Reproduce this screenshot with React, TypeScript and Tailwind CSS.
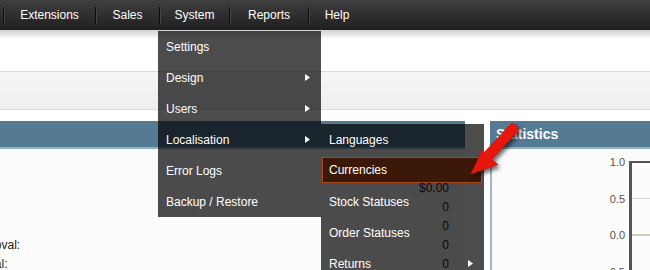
import React from 'react';

const navItems = [
  { label: 'Extensions', w: 'w-[91px]' },
  { label: 'Sales', w: 'w-[63px]' },
  { label: 'System', w: 'w-[69px]' },
  { label: 'Reports', w: 'w-[78px]' },
  { label: 'Help', w: 'w-[56px]' },
];

const systemMenu = [
  { label: 'Settings' },
  { label: 'Design', sub: true },
  { label: 'Users', sub: true },
  { label: 'Localisation', sub: true },
  { label: 'Error Logs' },
  { label: 'Backup / Restore' },
];

const localisationMenu = [
  { label: 'Languages' },
  { label: 'Currencies', active: true },
  { label: 'Stock Statuses' },
  { label: 'Order Statuses' },
  { label: 'Returns', sub: true },
  { label: 'Countries' },
];

const overview = [
  { label: 'Total Sales:', value: '$0.00' },
  { label: 'Total Sales This Year:', value: '$0.00' },
  { label: 'Total Orders:', value: '0' },
  { label: 'No. of Customers:', value: '0' },
  { label: 'Customers Awaiting Approval:', value: '0' },
  { label: 'Reviews Awaiting Approval:', value: '0' },
  { label: 'No. of Affiliates:', value: '0' },
];

function Caret() {
  return (
    <svg width="5" height="7" viewBox="0 0 5 7" className="mr-[11px] shrink-0">
      <polygon points="0,0 5,3.5 0,7" fill="#fff" />
    </svg>
  );
}

function MenuRow({ label, sub, active }: { label: string; sub?: boolean; active?: boolean }) {
  if (active) {
    return (
      <div className="h-[31px] pt-[2px] pb-[3px] pl-px pr-[2px]">
        <div className="flex h-full items-center border border-[#a9481c] bg-[#3b1808] pl-[6px] text-white">
          {label}
        </div>
      </div>
    );
  }
  return (
    <div className="flex h-[31px] items-center justify-between pl-[8px] text-white">
      <span>{label}</span>
      {sub && <Caret />}
    </div>
  );
}

function RedArrow() {
  return (
    <svg
      className="absolute left-[455px] top-[115px] drop-shadow-[2px_3px_2px_rgba(0,0,0,0.6)]"
      width="75"
      height="75"
      viewBox="455 115 75 75"
    >
      <path
        d="M511.4 123.6 Q517 123 518.6 130.4 L491.8 159.2 L497.6 164.6 L471 174 L482.3 150.3 L484.5 152.3 Z"
        fill="#e8170e"
        stroke="#d0120a"
        strokeWidth="0.8"
        strokeLinejoin="round"
      />
    </svg>
  );
}

export default function App() {
  return (
    <div className="relative h-[270px] w-[650px] overflow-hidden bg-white font-['Liberation_Sans',Arial,sans-serif] text-[12px] text-[#222]">
      {/* top navigation */}
      <nav className="flex h-[30px] items-center bg-[linear-gradient(to_bottom,#3f3f3f,#1f1f1f)] pl-[3px] text-white">
        {navItems.map((item) => (
          <div key={item.label} className="flex items-center">
            <span className="h-[17px] w-px bg-[#0e0e0e] shadow-[1px_0_0_#444]" />
            <span className={`${item.w} text-center`}>{item.label}</span>
          </div>
        ))}
      </nav>

      {/* header + breadcrumb band */}
      <div className="h-[41px] bg-[linear-gradient(to_bottom,#d0d0d0,#ffffff_9px)]" />
      <div className="h-[39px] border-y border-t-[#d9d9d9] border-b-[#dcdcdc] bg-[linear-gradient(to_bottom,#f6f6f6,#eeeeee)]" />
      <div className="h-[11px]" />

      {/* dashboard panels */}
      <div className="flex gap-[25px]">
        <div className="w-[465px] shrink-0">
          <div className="h-[28px] border-b-2 border-[#8fb0c6] bg-[#557a93]" />
          <div className="h-[130px] bg-[#fcfcfc] pt-[10px]">
            {overview.map((row) => (
              <div key={row.label} className="flex h-[19px] items-center whitespace-nowrap">
                <span className="-ml-[139px]">{row.label}</span>
                <span className="ml-auto pr-[16px]">{row.value}</span>
              </div>
            ))}
          </div>
        </div>

        <div className="min-w-0 flex-1 overflow-hidden">
          <div className="flex h-[28px] items-center border-b-2 border-[#8fb0c6] bg-[#557a93] pl-[6px] text-[14px] font-bold text-white">
            Statistics
          </div>
          <div className="h-[130px] border-l-2 border-[#9db8ca] bg-[#fcfcfc] pt-[12px]">
            <div className="ml-[113px] flex gap-[4px]">
              <div className="-mt-[5px] flex w-[20px] shrink-0 flex-col text-right text-[11px] leading-[12px] text-[#545454]">
                <div className="h-[36.5px]">1.0</div>
                <div className="h-[36.5px]">0.5</div>
                <div className="h-[36.5px]">0.0</div>
                <div className="h-[36.5px]">-0.5</div>
              </div>
              <svg width="30" height="120" className="shrink-0">
                <rect x="0" y="0" width="3" height="120" fill="#545454" />
                <rect x="0" y="0" width="30" height="2" fill="#545454" />
                <rect x="3" y="37" width="27" height="1" fill="#d6d6d6" />
                <rect x="3" y="73" width="27" height="2" fill="#c9d1bb" />
              </svg>
            </div>
          </div>
        </div>
      </div>

      {/* System dropdown */}
      <div className="absolute left-[158px] top-[31px] w-[163px] bg-black/70">
        {systemMenu.map((item) => (
          <MenuRow key={item.label} label={item.label} sub={item.sub} />
        ))}
      </div>

      {/* Localisation submenu */}
      <div className="absolute left-[321px] top-[124px] w-[163px] bg-black/70">
        {localisationMenu.map((item) => (
          <MenuRow key={item.label} label={item.label} sub={item.sub} active={item.active} />
        ))}
      </div>

      <RedArrow />
    </div>
  );
}
